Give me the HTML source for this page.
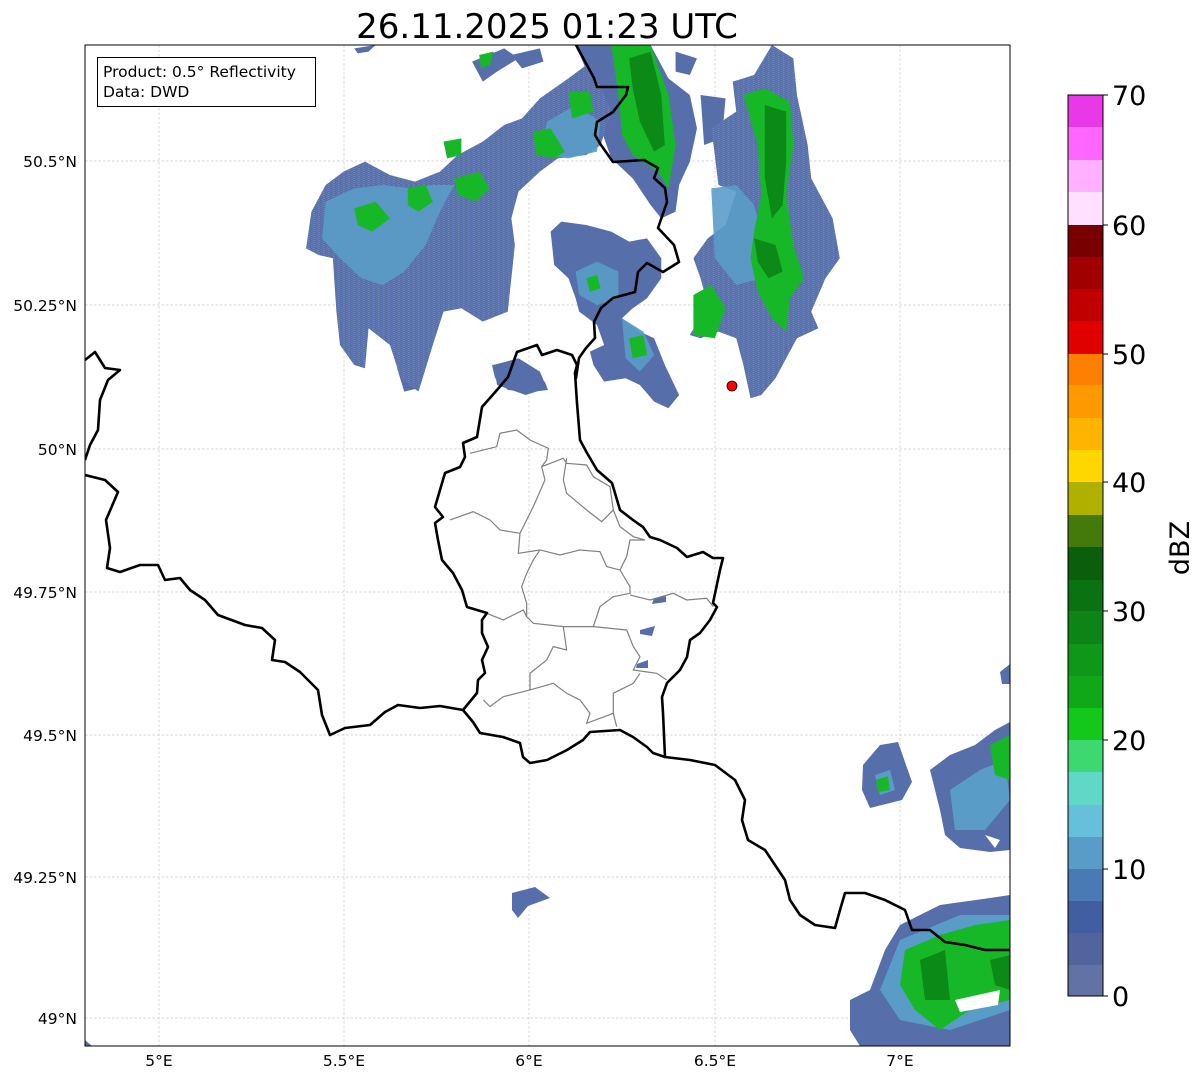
<!DOCTYPE html>
<html><head><meta charset="utf-8"><style>
html,body{margin:0;padding:0;background:#fff;}
body{width:1202px;height:1081px;overflow:hidden;font-family:"DejaVu Sans","Liberation Sans",sans-serif;}
</style></head><body>
<svg width="1202" height="1081" viewBox="0 0 1202 1081" xmlns="http://www.w3.org/2000/svg" style="display:block">
<defs><clipPath id="c"><rect x="85" y="45" width="925" height="1001"/></clipPath>
<pattern id="sp" width="14" height="6" patternUnits="userSpaceOnUse"><rect x="2" y="1" width="6" height="2" fill="#6a8ac0" opacity="0.6"/><rect x="9" y="4" width="4" height="1.5" fill="#fff" opacity="0.35"/></pattern></defs>
<text x="547" y="38" font-size="34" text-anchor="middle" font-family="DejaVu Sans, sans-serif">26.11.2025 01:23 UTC</text>
<g clip-path="url(#c)">
<g stroke="#c8c8c8" stroke-width="0.7" stroke-dasharray="2.5,2">
<line x1="85" y1="161" x2="1010" y2="161"/><line x1="85" y1="305" x2="1010" y2="305"/><line x1="85" y1="449" x2="1010" y2="449"/><line x1="85" y1="592" x2="1010" y2="592"/><line x1="85" y1="735" x2="1010" y2="735"/><line x1="85" y1="877" x2="1010" y2="877"/><line x1="85" y1="1018" x2="1010" y2="1018"/>
<line x1="159" y1="45" x2="159" y2="1046"/><line x1="344" y1="45" x2="344" y2="1046"/><line x1="529" y1="45" x2="529" y2="1046"/><line x1="715" y1="45" x2="715" y2="1046"/><line x1="900" y1="45" x2="900" y2="1046"/>
</g>
<g transform="translate(290,45) scale(0.357,0.3333)">
<g fill="#566fab" id="nb">
<polygon points="45,610 60,500 100,420 150,380 210,350 280,390 350,410 420,380 470,330 540,290 600,240 650,220 700,160 780,100 830,60 860,100 900,200 870,300 830,330 750,340 700,380 640,440 620,520 630,600 620,700 610,800 540,830 480,790 430,800 400,900 360,1040 310,1000 280,900 220,850 210,970 180,960 140,900 130,800 120,640 80,630"/>
<polygon points="730,560 760,530 830,540 900,560 950,590 1000,580 1040,640 1040,700 1000,760 960,790 930,820 980,860 1020,880 1050,960 1090,1050 1060,1090 1020,1070 980,1020 940,1000 880,1010 850,960 840,920 880,900 860,840 810,800 800,760 780,700 740,660"/>
<polygon points="800,0 1010,0 1060,100 1120,150 1140,250 1120,350 1090,420 1080,500 1040,520 1010,480 960,400 900,340 880,280 860,200 840,100"/>
<polygon points="1240,110 1300,90 1350,0 1410,40 1420,150 1450,300 1460,400 1520,520 1540,640 1500,700 1460,800 1480,850 1420,880 1360,1000 1320,1050 1290,1060 1270,960 1250,880 1200,860 1150,880 1120,870 1170,780 1150,700 1130,640 1170,580 1220,540 1250,440 1200,420 1190,330 1180,250 1250,200"/>
<polygon points="180,10 240,0 220,20 190,25"/>
<polygon points="510,50 600,10 640,40 580,80 540,110"/>
<polygon points="620,30 700,10 710,50 650,70"/>
<polygon points="1080,20 1140,40 1120,90 1080,80"/>
<polygon points="570,960 640,940 700,980 720,1030 660,1050 580,1020"/>
<polygon points="300,970 340,960 360,1030 320,1040"/>
<polygon points="1150,150 1220,160 1210,280 1160,300"/>
</g>
<g fill="url(#sp)">
<polygon points="45,610 60,500 100,420 150,380 210,350 280,390 350,410 420,380 470,330 540,290 600,240 650,220 700,160 780,100 830,60 860,100 900,200 870,300 830,330 750,340 700,380 640,440 620,520 630,600 620,700 610,800 540,830 480,790 430,800 400,900 360,1040 310,1000 280,900 220,850 210,970 180,960 140,900 130,800 120,640 80,630"/>
<polygon points="1240,110 1300,90 1350,0 1410,40 1420,150 1450,300 1460,400 1520,520 1540,640 1500,700 1460,800 1480,850 1420,880 1360,1000 1320,1050 1290,1060 1270,960 1250,880 1200,860 1150,880 1120,870 1170,780 1150,700 1130,640 1170,580 1220,540 1250,440 1200,420 1190,330 1180,250 1250,200"/>
</g>
<g fill="#5a9cc8" opacity="0.9">
<polygon points="100,470 180,430 260,420 340,430 400,420 460,420 420,500 380,600 320,680 260,720 200,700 140,640 90,580"/>
<polygon points="720,230 800,180 870,230 860,320 780,340 700,330"/>
<polygon points="800,680 860,650 920,680 920,760 860,780 810,750"/>
<polygon points="930,820 990,860 1020,930 980,980 940,940"/>
<polygon points="1180,430 1250,420 1300,480 1330,600 1320,700 1250,720 1190,640"/>
</g>
<g fill="#17b827">
<polygon points="900,0 1010,0 1060,150 1080,300 1060,430 1030,380 960,330 930,270 920,150"/>
<polygon points="1270,150 1330,130 1400,170 1410,300 1390,450 1410,600 1440,700 1400,760 1390,860 1350,820 1310,740 1290,640 1300,560 1320,450 1310,300"/>
<polygon points="680,260 730,250 770,320 740,340 690,330"/>
<polygon points="780,140 840,140 850,200 790,220"/>
<polygon points="1130,750 1180,720 1220,790 1190,880 1130,870"/>
<polygon points="180,490 240,470 280,520 230,560 190,540"/>
<polygon points="330,430 380,420 400,470 360,500 330,480"/>
<polygon points="460,400 530,380 560,430 520,470 470,450"/>
<polygon points="430,290 480,280 480,330 440,340"/>
<polygon points="950,880 990,870 1000,930 960,940"/>
<polygon points="530,30 570,20 560,60 535,70"/>
<polygon points="830,700 860,690 870,730 840,740"/>
</g>
<g fill="#0b8a18">
<polygon points="950,40 1010,20 1040,150 1050,300 1020,320 980,230 960,130"/>
<polygon points="1330,180 1390,200 1390,350 1380,480 1350,520 1330,400"/>
<polygon points="1300,580 1360,600 1380,680 1340,700 1310,650"/>
</g>
</g>
<g fill="#566fab">
<polygon points="492,365 515,362 530,370 545,382 548,390 530,392 508,390 495,378"/>
<polygon points="654,598 666,596 666,602 652,604"/>
<polygon points="640,630 655,626 652,636 640,634"/>
<polygon points="637,664 648,660 648,668 636,668"/>
<polygon points="512,893 535,887 550,898 528,906 518,918 512,910"/>
</g>
<g fill="#566fab">
<polygon points="850,1000 870,990 885,950 900,925 940,905 990,898 1010,895 1010,1046 860,1046 850,1030"/>
<polygon points="930,770 950,755 975,745 995,730 1010,722 1010,850 990,852 960,848 945,835 940,810 935,790"/>
<polygon points="863,765 880,745 898,742 912,782 902,800 870,808 862,790"/>
<polygon points="1000,672 1010,664 1010,684 1002,684"/>
<polygon points="85,1040 92,1046 85,1046"/>
</g>
<g fill="#5a9cc8"><polygon points="900,940 960,915 1010,915 1010,1010 950,1030 900,1020 880,990"/>
<polygon points="950,790 980,770 1005,760 1010,800 985,830 955,830"/>
<polygon points="875,775 890,770 895,790 880,795"/></g>
<g fill="#17b827"><polygon points="905,950 940,935 975,925 1010,920 1010,1000 970,1010 940,1030 915,1010 900,985"/>
<polygon points="990,745 1010,735 1010,780 995,775"/><polygon points="876,780 888,776 890,790 878,792"/></g>
<g fill="#0b8a18"><polygon points="920,960 945,950 950,1000 925,1000"/><polygon points="990,960 1010,955 1010,990 995,985"/></g>
<g fill="#fff"><polygon points="955,1000 1000,990 998,1005 960,1012"/><polygon points="985,835 1000,840 995,848"/></g>
<g transform="translate(420,340) scale(0.3333)" fill="none" stroke="#808080" stroke-width="3.6">
<polyline points="150,340 230,320 240,280 290,270 330,300 385,325 380,360 365,380 375,420 340,500 320,540 300,580 295,640 360,630 420,645 480,630 540,635 560,680 600,690 630,740 630,760 580,770 540,800 520,860 430,860 340,850 320,830 320,790 305,740 320,700 340,660 360,630"/>
<polyline points="90,540 160,515 210,540 240,570 300,580"/>
<polyline points="365,380 430,355 440,370 500,375 520,410 570,440 580,510 545,545 500,510 440,460 430,420 440,355"/>
<polyline points="580,510 600,560 640,590 675,600 630,600 620,650 600,690"/>
<polyline points="630,765 690,780 760,760 800,780 860,775 880,800"/>
<polyline points="520,860 620,870 640,920 660,950 640,990 710,1000 740,1020"/>
<polyline points="430,860 440,930 400,920 380,960 330,1000 330,1050 250,1070 210,1100 190,1080"/>
<polyline points="330,1050 400,1030 440,1060 480,1080 510,1120 500,1150 580,1120 590,1160"/>
<polyline points="580,1120 580,1060 640,1030 660,1000"/>
<polyline points="200,820 250,840 310,810 320,830"/>
</g>
<g fill="none" stroke="#000" stroke-width="2.6" stroke-linejoin="round">
<polyline points="85,475 105,480 118,492 106,520 110,548 107,568 120,572 140,565 158,565 165,580 180,578 190,590 205,600 218,615 245,625 262,628 275,640 272,660 285,662 300,672 318,690 322,715 330,735 345,728 370,725 385,712 398,705 420,708 440,706 463,710"/>
<polyline points="85,360 95,352 105,368 120,370 108,380 100,400 98,430 90,445 85,460"/>
<polygon points="537,345 542,355 557,350 572,355 577,365 575,373 577,403 580,440 587,453 597,470 612,483 620,510 633,520 643,527 650,537 660,540 677,548 687,557 703,552 713,558 723,558 720,570 713,603 717,607 710,620 700,633 690,640 687,657 680,670 667,683 662,697 663,713 665,757 653,753 647,747 633,737 620,730 590,732 583,740 567,750 547,760 530,763 523,757 520,743 503,737 480,733 473,722 463,710 477,693 478,680 485,673 482,660 488,647 482,633 482,620 487,613 467,607 462,590 453,573 442,560 438,540 435,523 443,517 435,507 445,473 460,467 465,457 463,443 477,437 482,407 497,390 508,377 517,352"/>
<polyline points="576,45 594,78 597,87 628,87 626,95 613,112 597,122 595,135 601,145 613,162 644,160 658,168 654,178 665,188 667,202 658,228 674,245 679,262 663,272 647,263 638,272 635,292 613,298 601,308 594,322 595,338 586,348 579,358 576,378 575,373"/>
<polyline points="665,757 690,760 715,765 735,780 745,800 742,820 748,840 765,850 775,865 785,880 790,900 800,915 815,925 835,928 840,910 845,893 865,893 885,900 905,910 912,930 930,930 945,942 965,945 985,950 1010,950"/>
</g>
<circle cx="732" cy="386" r="5" fill="#f00" stroke="#000" stroke-width="0.8"/>
</g>
<rect x="85" y="45" width="925" height="1001" fill="none" stroke="#000" stroke-width="1"/>
<rect x="97.5" y="57.5" width="218" height="49" fill="#fff" stroke="#000" stroke-width="1"/>
<text x="103" y="77" font-size="15.5">Product: 0.5° Reflectivity</text>
<text x="103" y="97" font-size="15.5">Data: DWD</text>
<g font-size="15.5" text-anchor="end">
<text x="77" y="167">50.5°N</text><text x="77" y="311">50.25°N</text><text x="77" y="455">50°N</text><text x="77" y="598">49.75°N</text><text x="77" y="741">49.5°N</text><text x="77" y="883">49.25°N</text><text x="77" y="1024">49°N</text>
</g>
<g font-size="15.5" text-anchor="middle">
<text x="159" y="1066">5°E</text><text x="344" y="1066">5.5°E</text><text x="529" y="1066">6°E</text><text x="715" y="1066">6.5°E</text><text x="900" y="1066">7°E</text>
</g>
<g>
<rect x="1068" y="95" width="35" height="33" fill="#e838e8"/>
<rect x="1068" y="127" width="35" height="33" fill="#ff66ff"/>
<rect x="1068" y="160" width="35" height="33" fill="#ffb0ff"/>
<rect x="1068" y="192" width="35" height="33" fill="#ffe0ff"/>
<rect x="1068" y="225" width="35" height="33" fill="#780000"/>
<rect x="1068" y="257" width="35" height="33" fill="#a00000"/>
<rect x="1068" y="289" width="35" height="33" fill="#c00000"/>
<rect x="1068" y="321" width="35" height="34" fill="#e00000"/>
<rect x="1068" y="354" width="35" height="32" fill="#ff7f00"/>
<rect x="1068" y="385" width="35" height="34" fill="#ff9900"/>
<rect x="1068" y="418" width="35" height="33" fill="#ffb400"/>
<rect x="1068" y="450" width="35" height="33" fill="#ffd700"/>
<rect x="1068" y="482" width="35" height="34" fill="#b0b000"/>
<rect x="1068" y="515" width="35" height="33" fill="#447a0c"/>
<rect x="1068" y="547" width="35" height="34" fill="#0a5e0c"/>
<rect x="1068" y="580" width="35" height="32" fill="#0a7210"/>
<rect x="1068" y="611" width="35" height="34" fill="#0c8416"/>
<rect x="1068" y="644" width="35" height="33" fill="#0e9818"/>
<rect x="1068" y="676" width="35" height="33" fill="#10a818"/>
<rect x="1068" y="708" width="35" height="33" fill="#12c81a"/>
<rect x="1068" y="740" width="35" height="33" fill="#3ed870"/>
<rect x="1068" y="772" width="35" height="34" fill="#5fd8c8"/>
<rect x="1068" y="805" width="35" height="33" fill="#66c0dc"/>
<rect x="1068" y="837" width="35" height="33" fill="#5a9cc8"/>
<rect x="1068" y="869" width="35" height="33" fill="#4a7ab4"/>
<rect x="1068" y="901" width="35" height="33" fill="#415ea0"/>
<rect x="1068" y="933" width="35" height="33" fill="#52649c"/>
<rect x="1068" y="965" width="35" height="31" fill="#6272a4"/>
<rect x="1068" y="95" width="35" height="901" fill="none" stroke="#000" stroke-width="1"/>
<g stroke="#000" stroke-width="1"><line x1="1103" y1="95" x2="1108" y2="95"/><line x1="1103" y1="225" x2="1108" y2="225"/><line x1="1103" y1="354" x2="1108" y2="354"/><line x1="1103" y1="482" x2="1108" y2="482"/><line x1="1103" y1="611" x2="1108" y2="611"/><line x1="1103" y1="740" x2="1108" y2="740"/><line x1="1103" y1="869" x2="1108" y2="869"/><line x1="1103" y1="996" x2="1108" y2="996"/></g>
<g font-size="27"><text x="1112" y="105">70</text><text x="1112" y="235">60</text><text x="1112" y="364">50</text><text x="1112" y="492">40</text><text x="1112" y="621">30</text><text x="1112" y="750">20</text><text x="1112" y="879">10</text><text x="1112" y="1006">0</text></g>
<text transform="translate(1189,548) rotate(-90)" font-size="27" text-anchor="middle">dBZ</text>
</g>
</svg>
</body></html>
